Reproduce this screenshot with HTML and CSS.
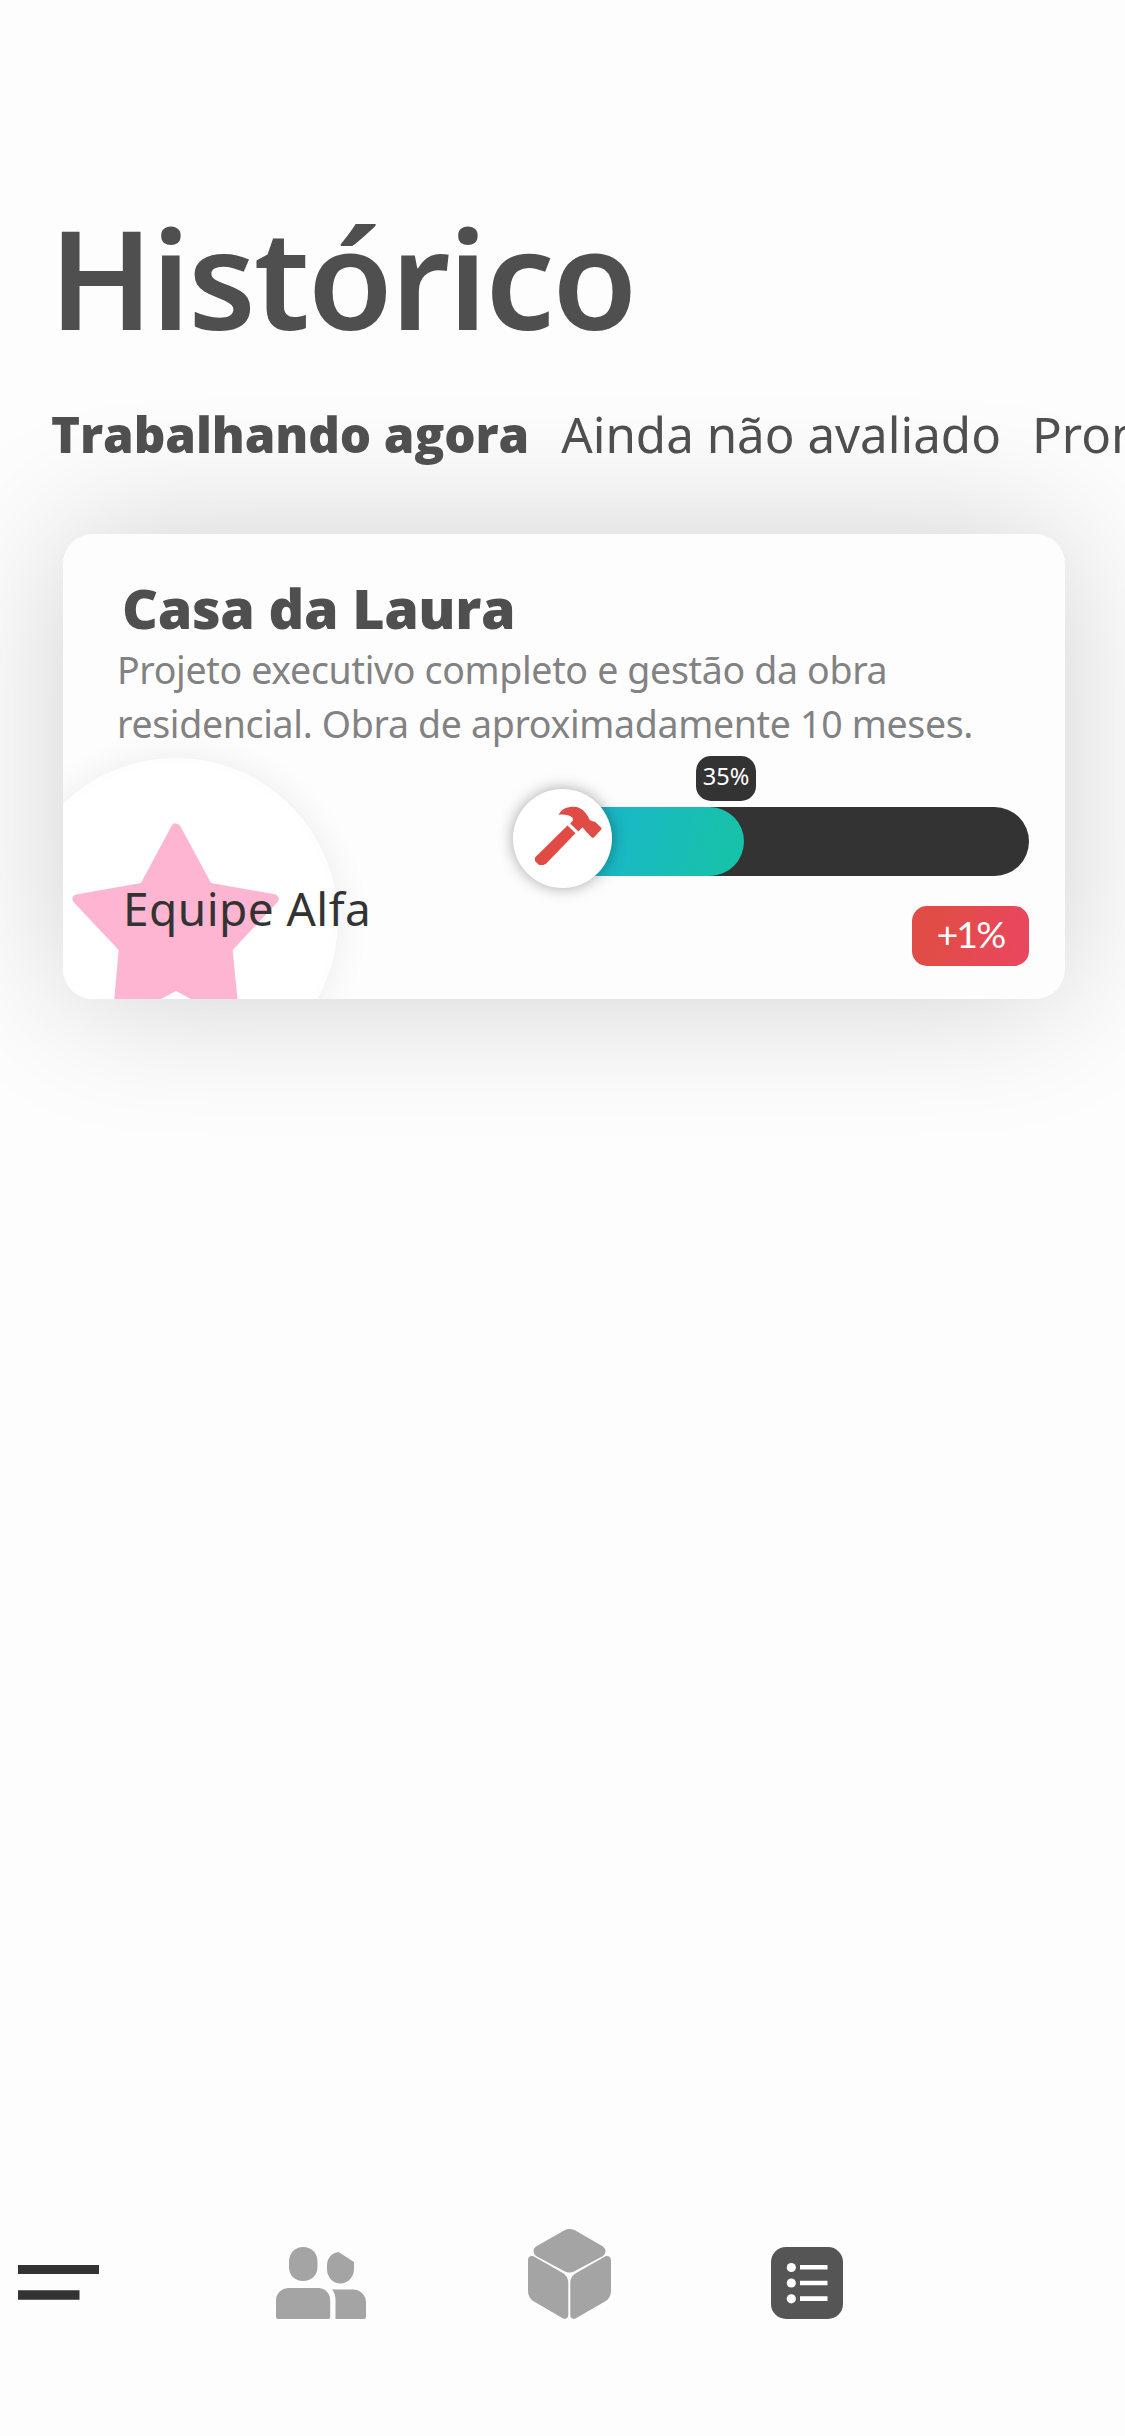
FILE: index.html
```html
<!DOCTYPE html>
<html lang="pt-BR">
<head>
<meta charset="utf-8">
<title>Histórico</title>
<link rel="stylesheet" href="styles.css">
</head>
<body>
<main class="screen">
  <h1 class="heading">Histórico</h1>
  <div class="tabs">
    <span class="tab tab-active">Trabalhando agora</span>
    <span class="tab">Ainda não avaliado</span>
    <span class="tab">Prontos</span>
  </div>

  <article class="card">
    <div class="team-logo">
      <svg width="324" height="324" viewBox="20 764 312 312">
        <path class="star" d="M172 825Q174.500 821.500 180 825.500L211 883L276 894.500Q280.500 898 278 901.500L232.700 950L242 1046L176 1020L110 1046L118.700 950L73 901.500Q71 896.500 76 894.500L141 883Z"/>
        <path class="star-cut" d="M176 991L204 1006V1030H148V1006Z"/>
      </svg>
    </div>
    <h2 class="card-title">Casa da Laura</h2>
    <p class="card-text">Projeto executivo completo e gestão da obra<br>residencial. Obra de aproximadamente 10 meses.</p>
    <div class="card-bottom">
      <div class="team-name">Equipe Alfa</div>
      <div class="progress">
        <div class="bubble">35%</div>
        <div class="track">
          <div class="fill"></div>
          <div class="knob">
            <svg width="99" height="99" viewBox="13 14 99 99">
              <path class="hammer" d="M58.700 40C61 34 67 31.800 74 31.800C81 32 86 37 89.500 44.500C91 46.200 93 46.200 95 46.700L101.500 53L101.300 54.500L93.500 62.800H92L86.500 57L82.500 52.300L78.500 56.500L70.200 48.500L73 45.500L72.500 42.500C69 40 64 39 58.700 40ZM67.500 50.500L75.500 58.300L46 88.700L43.500 90H39L35 86V82.500Z"/>
            </svg>
          </div>
        </div>
        <div class="pill">+1%</div>
      </div>
    </div>
  </article>

  <nav class="nav">
    <svg class="nav-menu" width="81" height="36" viewBox="0 0 81 36"><path d="M0 0H81V9H0ZM0 25.300H61.500V34.700H0Z" fill="#333"/></svg>
    <svg width="90" height="72" viewBox="0 0 90 72" fill="#a4a4a4">
      <path d="M27 0C36 0 41.500 6.500 41.500 15V20C41.500 28.500 35 34 27 34S13 28.500 13 20V15C13 6.500 18.500 0 27 0Z"/>
      <path d="M62.500 5L78 15V22C78 30 72 36.500 64.500 36.500S51 30.500 51 22V18C51 11 56.500 5.500 62.500 5Z"/>
      <path d="M12 41H43C50 41.500 54.200 47 54.200 53V70Q54.200 72 52.500 72H2Q0 72 0 70V53C0 47 5 41.500 12 41ZM56 42.500H77C84.500 42.500 90 48.500 90 55V70Q90 72 88 72H59.500V53C59.500 49 58.500 45 56 42.500Z"/>
    </svg>
    <svg width="83" height="90" viewBox="0 0 83 90" fill="#a4a4a4">
      <path d="M36.500 1.200Q41.500-1 47 1.200L75 17.500Q80 22 75 27L47 42Q41.500 45 36 42L8 27Q3 22 8 17.500Z"/>
      <path d="M5 27L34 43.500Q40.300 47 40.300 54V86Q40 90.500 35.500 89.700L6 72.500Q0 69 0 62V31Q0 26.500 5 27Z"/>
      <path d="M78 27L49 43.500Q42.300 47 42.300 54V86Q42.500 90.500 47 89.700L77 72.500Q83 69 83 62V31Q82.500 26.500 78 27Z"/>
    </svg>
    <svg width="72" height="72" viewBox="0 0 72 72">
      <rect width="72" height="72" rx="15" fill="#555"/>
      <path d="M29 18H56.500V22.600H29ZM29 33.800H56.500V38.300H29ZM29 49.300H56.500V54H29Z" fill="#fff"/>
      <g fill="#fff"><circle cx="20.300" cy="20.500" r="4.600"/><circle cx="20.300" cy="36" r="4.600"/><circle cx="20.300" cy="51.800" r="4.600"/></g>
    </svg>
  </nav>
</main>
</body>
</html>
```
FILE: styles.css
```css
* { box-sizing: border-box; }

body {
  margin: 0;
  background: #fdfdfd;
  color: #4f4f4f;
  font-family: "Noto Sans", "Open Sans", sans-serif;
}

.screen {
  display: flex;
  flex-direction: column;
  width: 1125px;
  height: 2436px;
  padding-top: 206px;
  overflow: hidden;
}

.heading {
  margin: 0 0 58px 49px;
  font-size: 138px;
  font-weight: 600;
  line-height: 140px;
  letter-spacing: -2.200px;
}

.tabs {
  position: relative;
  z-index: 1;
  display: flex;
  gap: 32px;
  padding-left: 51px;
  font-size: 49.300px;
  line-height: 60px;
  white-space: nowrap;
}

.tab:last-child { margin-left: -1px; }

.tab-active {
  font-family: "Open Sans", sans-serif;
  font-weight: 800;
  letter-spacing: -0.100px;
}

.card {
  position: relative;
  width: 1002px;
  height: 465px;
  margin: 70px 0 0 63px;
  padding: 44px 36px 0 53px;
  border-radius: 30px;
  background: #fdfdfd;
  box-shadow: 0 0 140px rgba(0, 0, 0, 0.18);
}

/* The emblem is cut off by the rounded corner of the card. */
.team-logo {
  position: absolute;
  inset: 0;
  overflow: hidden;
  border-radius: 30px;
}

.team-logo svg {
  display: block;
  margin: 224px 0 0 -49px;
  border: 6px solid #fefefe;
  border-radius: 50%;
  background: #fff;
  box-shadow: 0 0 36px rgba(0, 0, 0, 0.07);
}

.star { fill: #fdb5d2; }
.star-cut { fill: #fff; }

.card-title {
  position: relative;
  margin: 0 0 5px 6px;
  font: 800 55.600px/60px "Open Sans", sans-serif;
  letter-spacing: -0.400px;
}

.card-text {
  position: relative;
  margin: 0 0 0 1px;
  color: #828282;
  font-size: 37.500px;
  font-weight: 400;
  line-height: 54px;
  letter-spacing: -0.330px;
  white-space: nowrap;
}

.card-bottom {
  position: relative;
  display: flex;
  justify-content: space-between;
  padding-top: 5px;
}

.team-name {
  margin: 122px 0 0 7px;
  color: #333;
  font-size: 46px;
  line-height: 60px;
  letter-spacing: 0.450px;
}

.progress {
  display: flex;
  flex-direction: column;
  width: 489px;
}

.bubble {
  width: 60px;
  height: 45px;
  margin: 0 0 6px 156px;
  border-radius: 15px;
  background: #333;
  color: #fff;
  font-size: 23.600px;
  font-weight: 400;
  line-height: 41px;
  letter-spacing: -0.100px;
  text-align: center;
}

.track {
  position: relative;
  height: 69px;
  border-radius: 35px;
  background: #333;
}

.fill {
  width: 204px;
  height: 69px;
  border-radius: 35px;
  background: linear-gradient(105deg, #1ab5cd 20%, #17c2aa 90%);
}

.knob {
  position: absolute;
  top: -18px;
  left: -27px;
  width: 99px;
  height: 99px;
  border-radius: 50%;
  background: #fff;
  box-shadow: 0 0 15px rgba(0, 0, 0, 0.35);
}

.knob svg { display: block; }
.hammer { fill: #e04b46; }

.pill {
  width: 117px;
  height: 60px;
  margin: 30px 0 0 auto;
  border-radius: 15px;
  background: linear-gradient(105deg, #e24c46 25%, #ea4662);
  color: #fff;
  font: 400 37.500px/55px Lato, sans-serif;
  letter-spacing: -1.800px;
  text-align: center;
}

.nav {
  display: grid;
  grid-template-columns: 258px 252px 243px 72px;
  align-items: end;
  margin-top: auto;
  padding: 0 0 117px 18px;
}

.nav-menu { margin-bottom: 18px; }
```
